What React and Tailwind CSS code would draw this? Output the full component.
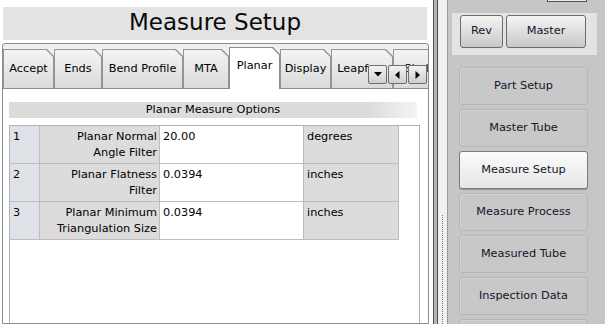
export default function App() {
  const tabs = [
    { label: "Accept", w: "w-[51px]" },
    { label: "Ends", w: "w-[48px]" },
    { label: "Bend Profile", w: "w-[81px]" },
    { label: "MTA", w: "w-[46px]" },
    { label: "Planar", w: "w-[51px]", sel: true },
    { label: "Display", w: "w-[51px]" },
    { label: "Leapfrog", w: "w-[62px]" },
    { label: "Shell", w: "w-[50px]" },
  ];
  const rows = [
    { n: "1", l1: "Planar Normal", l2: "Angle Filter", v: "20.00", u: "degrees" },
    { n: "2", l1: "Planar Flatness", l2: "Filter", v: "0.0394", u: "inches" },
    { n: "3", l1: "Planar Minimum", l2: "Triangulation Size", v: "0.0394", u: "inches" },
  ];
  const nav = ["Part Setup", "Master Tube", "Measure Setup", "Measure Process", "Measured Tube", "Inspection Data", ""];

  return (
    <div className="w-[605px] h-[324px] flex bg-white overflow-hidden font-['DejaVu_Sans',sans-serif] text-black">
      {/* Left column */}
      <div className="w-[429px] flex flex-col shrink-0">
        <div className="mt-[7px] ml-[3px] w-[424px] h-[33px] shrink-0 bg-[#e3e3e3] flex items-center justify-center">
          <span className="text-[23px] leading-none text-[#0a0a0a] -mt-[2px]">Measure Setup</span>
        </div>
        <div className="mt-[3px] ml-[2px] w-[427px] flex-1 border border-[#8c8c8c] rounded-t-[3px] bg-[#f0f0f0] flex flex-col overflow-hidden relative">
          {/* tab strip */}
          <div className="flex items-end h-[44px] relative z-10 shrink-0">
            {tabs.map((t) =>
              t.sel ? (
                <div key={t.label} className={`${t.w} shrink-0 h-[42px] -mb-[1px] bg-[#8c8c8c] pt-[1px] px-[1px] [clip-path:polygon(0_0,calc(100%_-_7px)_0,100%_7px,100%_100%,0_100%)]`}>
                  <div className="h-full bg-white flex items-center justify-center pb-[4px] text-[11.3px] [clip-path:polygon(0_0,calc(100%_-_7px)_0,100%_7px,100%_100%,0_100%)]">
                    {t.label}
                  </div>
                </div>
              ) : (
                <div key={t.label} className={`${t.w} shrink-0 h-[39px] bg-[#949494] pt-[1px] px-[1px] [clip-path:polygon(0_0,calc(100%_-_7px)_0,100%_7px,100%_100%,0_100%)]`}>
                  <div className="h-full bg-gradient-to-b from-[#f4f4f4] to-[#dadada] flex items-center justify-center pt-[1px] text-[11.3px] whitespace-nowrap overflow-hidden [clip-path:polygon(0_0,calc(100%_-_7px)_0,100%_7px,100%_100%,0_100%)]">
                    {t.label}
                  </div>
                </div>
              )
            )}
          </div>
          {/* scroll buttons overlay */}
          <div className="absolute left-[365px] top-[21px] z-20 flex gap-[1px]">
            <div className="w-[19px] h-[19px] rounded-[2px] border border-[#6e6e6e] bg-gradient-to-b from-[#f2f2f2] to-[#cfcfcf] flex items-center justify-center">
              <svg width="8" height="5" viewBox="0 0 8 5"><path d="M0 0H8L4 4.5Z" fill="#000" /></svg>
            </div>
            <div className="w-[19px] h-[19px] rounded-[2px] border border-[#6e6e6e] bg-gradient-to-b from-[#f2f2f2] to-[#cfcfcf] flex items-center justify-center">
              <svg width="5" height="8" viewBox="0 0 5 8"><path d="M4.5 0V8L0 4Z" fill="#000" /></svg>
            </div>
            <div className="w-[19px] h-[19px] rounded-[2px] border border-[#6e6e6e] bg-gradient-to-b from-[#f2f2f2] to-[#cfcfcf] flex items-center justify-center">
              <svg width="5" height="8" viewBox="0 0 5 8"><path d="M0.5 0V8L5 4Z" fill="#000" /></svg>
            </div>
          </div>
          {/* pane */}
          <div className="flex-1 bg-white border-t border-[#8c8c8c] pl-[6px] pr-[9px] pt-[13px] flex flex-col">
            <div className="h-[16px] w-[408px] shrink-0 bg-gradient-to-r from-[#dcdcdc] via-[#dcdcdc] via-[88%] to-[#f4f4f4] flex items-center justify-center text-[11.3px] leading-none">
              <span className="-mt-[1px]">Planar Measure Options</span>
            </div>
            <div className="mt-[7px] flex-1 w-[411px] border-l border-t border-r border-[#a7b4c4] bg-white">
              <div className="w-[389px] grid grid-cols-[30px_120px_144px_95px]">
                {rows.map((r) => (
                  <div key={r.n} className="contents">
                    <div className="h-[38px] bg-[#dee2e7] border-r border-b border-[#bdbdbd] pl-[3px] pt-[3px] text-[11.3px] leading-[16px]">{r.n}</div>
                    <div className="h-[38px] bg-[#dcdcdc] border-r border-b border-[#bdbdbd] pr-[2px] pt-[3px] text-right text-[11.3px] leading-[16px] whitespace-nowrap">
                      <div>{r.l1}</div>
                      <div>{r.l2}</div>
                    </div>
                    <div className="h-[38px] bg-white border-r border-b border-[#bdbdbd] pl-[3px] pt-[3px] text-[11.3px] leading-[16px]">{r.v}</div>
                    <div className="h-[38px] bg-[#dcdcdc] border-r border-b border-[#bdbdbd] pl-[3px] pt-[3px] text-[11.3px] leading-[16px]">{r.u}</div>
                  </div>
                ))}
              </div>
            </div>
          </div>
        </div>
      </div>

      {/* Splitter */}
      <div className="w-[4px] shrink-0 bg-white" />
      <div className="w-[1px] shrink-0 bg-[#505050]" />
      <div className="w-[3px] shrink-0 bg-[#b4b4b4]" />
      <div className="w-[1px] shrink-0 bg-[#505050]" />
      <div className="w-[9px] shrink-0 bg-[#f0f0f0] flex justify-center">
        <div className="w-[1px] h-full mt-[215px] bg-[repeating-linear-gradient(to_bottom,#707070_0,#707070_1px,transparent_1px,transparent_2px)]" />
      </div>

      {/* Right panel */}
      <div className="flex-1 h-[324px] overflow-hidden bg-[#c6c6c6] border-l border-[#9a9a9a] flex flex-col">
        <div className="shrink-0 ml-[99px] w-[40px] h-[2px] border-b border-l border-r border-[#505050] bg-[#eeeeee]" />
        <div className="shrink-0 mt-[11px] ml-[4px] w-[145px] h-[42px] bg-[#e3e3e3] flex items-start pt-[2px] pl-[8px] gap-[3px]">
          <div className="w-[43px] h-[33px] rounded-[3px] border border-[#6b6b6b] bg-gradient-to-b from-[#f5f5f5] to-[#c8c8c8] flex items-center justify-center text-[11.3px] text-[#14142a]">Rev</div>
          <div className="w-[80px] h-[33px] rounded-[3px] border border-[#6b6b6b] bg-gradient-to-b from-[#f5f5f5] to-[#c8c8c8] flex items-center justify-center text-[11.3px] text-[#14142a]">Master</div>
        </div>
        <div className="shrink-0 mt-[12px] ml-[11px] w-[129px] flex flex-col gap-[4px]">
          {nav.map((n, i) =>
            n === "Measure Setup" ? (
              <div key={i} className="h-[38px] shrink-0 rounded-[3px] border border-[#7c7c7c] bg-gradient-to-b from-[#fbfbfb] to-[#e6e6e6] shadow-[0_1px_1px_rgba(0,0,0,0.25)] flex items-center justify-center text-[11.3px] text-[#14142a]">{n}</div>
            ) : (
              <div key={i} className="h-[38px] shrink-0 rounded-[3px] border border-[#b6b6b6] bg-[#c8c8c8] shadow-[inset_1px_1px_0_#d2d2d2] flex items-center justify-center text-[11.3px] text-[#14142a]">{n}</div>
            )
          )}
        </div>
      </div>
    </div>
  );
}
